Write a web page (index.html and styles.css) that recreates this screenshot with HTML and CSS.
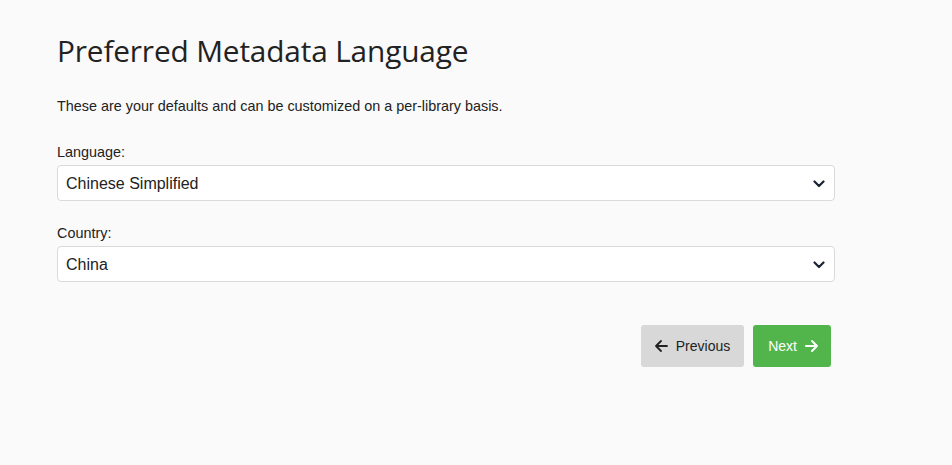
FILE: index.html
```html
<!DOCTYPE html>
<html lang="en">
<head>
    <meta charset="UTF-8">
    <title>Preferred Metadata Language</title>
    <link rel="stylesheet" href="styles.css">
</head>
<body>
    <div class="wizard">
        <h1>Preferred Metadata Language</h1>
        <p class="intro">These are your defaults and can be customized on a per-library basis.</p>

        <div class="field">
            <label for="language">Language:</label>
            <div class="select-wrap">
                <select id="language">
                    <option>Chinese Simplified</option>
                </select>
                <svg class="chevron" viewBox="0 0 12 8" width="12" height="8"><path d="M1.5 1.5 L6 6 L10.5 1.5" fill="none" stroke="#1b2333" stroke-width="2.2" stroke-linecap="round" stroke-linejoin="round"/></svg>
            </div>
        </div>

        <div class="field">
            <label for="country">Country:</label>
            <div class="select-wrap">
                <select id="country">
                    <option>China</option>
                </select>
                <svg class="chevron" viewBox="0 0 12 8" width="12" height="8"><path d="M1.5 1.5 L6 6 L10.5 1.5" fill="none" stroke="#1b2333" stroke-width="2.2" stroke-linecap="round" stroke-linejoin="round"/></svg>
            </div>
        </div>

        <div class="actions">
            <button class="btn btn-prev" type="button">
                <svg viewBox="0 0 14 14" width="14" height="14"><path d="M13 7 H2 M7 2 L2 7 L7 12" fill="none" stroke="#222" stroke-width="1.8" stroke-linecap="round" stroke-linejoin="round"/></svg>
                Previous
            </button>
            <button class="btn btn-next" type="button">
                Next
                <svg viewBox="0 0 14 14" width="14" height="14"><path d="M1 7 H12 M7 2 L12 7 L7 12" fill="none" stroke="#fff" stroke-width="2" stroke-linecap="round" stroke-linejoin="round"/></svg>
            </button>
        </div>
    </div>
</body>
</html>
```

FILE: styles.css
```css
* {
    margin: 0;
    padding: 0;
    box-sizing: border-box;
}

body {
    font-family: "Liberation Sans", Arial, sans-serif;
    background: #fafafa;
    color: #222;
}

.wizard {
    width: 778px;
    margin-left: 57px;
    padding-top: 32px;
}

h1 {
    font-family: "Open Sans", "Noto Sans", sans-serif;
    font-weight: 400;
    font-size: 29.8px;
    line-height: 38px;
    color: #222;
    letter-spacing: -0.15px;
}

.intro {
    font-size: 14.4px;
    line-height: 18px;
    margin-top: 27px;
}

.field {
    margin-top: 28px;
}

.field + .field {
    margin-top: 23px;
}

label {
    display: block;
    font-size: 14.4px;
    line-height: 18px;
    margin-bottom: 4px;
}

.select-wrap {
    position: relative;
}

select {
    appearance: none;
    -webkit-appearance: none;
    width: 100%;
    height: 36px;
    padding: 0 8px;
    font-family: "Liberation Sans", Arial, sans-serif;
    font-size: 16px;
    color: #222;
    background: #fff;
    border: 1px solid #dadada;
    border-radius: 4px;
}

.chevron {
    position: absolute;
    right: 10px;
    top: 15px;
    pointer-events: none;
}

.actions {
    display: flex;
    justify-content: flex-end;
    gap: 9px;
    margin-top: 43px;
    padding-right: 4px;
}

.btn {
    display: flex;
    align-items: center;
    gap: 8px;
    height: 42px;
    border: none;
    border-radius: 3px;
    font-family: "Liberation Sans", Arial, sans-serif;
    font-size: 14px;
    cursor: pointer;
}

.btn-prev {
    background: #d8d8d8;
    color: #222;
    padding: 0 14px 0 13px;
}

.btn-next {
    background: #52b54b;
    color: #fff;
    padding: 0 12px 0 15px;
}
```
